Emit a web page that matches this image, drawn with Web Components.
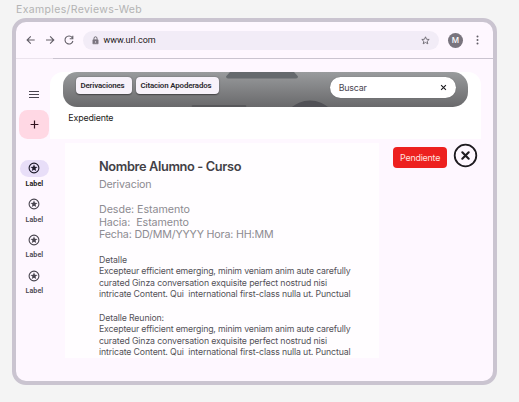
<!DOCTYPE html>
<html lang="es"><head><meta charset="utf-8"><title>Reviews</title>
<style>
body{margin:0;background:#f4f4f4;width:519px;height:402px;overflow:hidden;font-family:Inter,"Liberation Sans",sans-serif}
</style></head><body>
<reviews-page></reviews-page>
<script>
const define=(name,html,after)=>customElements.define(name,class extends HTMLElement{
  connectedCallback(){
    if(this.shadowRoot)return;
    const t=document.createElement('template');t.innerHTML=html;
    this.attachShadow({mode:'open'}).append(t.content.cloneNode(true));
    if(after)after(this);
  }
});

// One line of text, tracked so that it fills the width given in "w".
define('fit-line',`<style>:host{display:block;white-space:pre}span{display:inline-block}</style><span><slot></slot></span>`,el=>{
  const w=parseFloat(el.getAttribute('w'));
  const s=el.shadowRoot.querySelector('span');
  const n=el.textContent.length;
  if(w&&n)s.style.letterSpacing=((w-s.getBoundingClientRect().width)/n).toFixed(4)+'px';
});

define('browser-bar',`<style>
:host{display:flex;height:36px;box-sizing:border-box;align-items:center;padding:0 10px 0 9px;color:#1d1b20;flex:none}
svg{display:block;fill:none;stroke:#625e67;stroke-width:1.1}
.nav{display:flex;gap:7px;width:58px;flex:none}
.url{display:flex;align-items:center;box-sizing:border-box;width:356px;height:19px;border-radius:10px;background:#f2ecf7;padding:0 9px 0 9px;font:400 9px Roboto,sans-serif}
.url fit-line{margin-left:4.6px;flex:1}
.avatar{width:15px;height:15px;border-radius:50%;background:#79747e;color:#fff;font:500 8px/15px Inter,sans-serif;text-align:center;margin-left:9px}
.dots{margin-left:12px}
</style>
<div class="nav">
<svg width="12" height="12" viewBox="0 0 12 12"><path d="M9.7 6H2.3M5.8 2.3 2.1 6l3.7 3.7"/></svg>
<svg width="12" height="12" viewBox="0 0 12 12"><path d="M2 6h7.5M6.1 2.3 9.8 6 6.1 9.7"/></svg>
<svg width="12" height="12" viewBox="0 0 12 12"><path d="M9.2 3.6A4 4 0 1 0 9.9 7M9.8 1.8v3H6.7"/></svg>
</div>
<div class="url">
<svg width="7" height="9" viewBox="0 0 7 9"><path d="M.9 3.8h5.2v4H.9z" fill="#79747e" stroke="#79747e" style="fill:#79747e;stroke:#79747e;stroke-width:.7"/><path d="M2 3.5V2.3a1.5 1.5 0 0 1 3 0v1.2" style="stroke-width:.9"/><circle cx="3.5" cy="5.9" r=".7" style="fill:#f2ecf7;stroke:none"/></svg>
<fit-line w="52">www.url.com</fit-line>
<svg width="9" height="9" viewBox="0 0 9 9" style="stroke-width:.85"><path d="m4.5.8 1.05 2.45 2.65.22-2 1.75.6 2.6L4.5 6.45 2.2 7.82l.6-2.6-2-1.75 2.65-.22z"/></svg>
</div>
<div class="avatar">M</div>
<svg class="dots" width="5" height="10" viewBox="0 0 5 10"><g style="fill:#625e67;stroke:none"><circle cx="2.5" cy="1.5" r="1"/><circle cx="2.5" cy="5" r="1"/><circle cx="2.5" cy="8.5" r="1"/></g></svg>`);

define('rail-item',`<style>
:host{display:flex;flex-direction:column;align-items:center;height:35.8px;flex:none;font:600 7.1px/9px Roboto,sans-serif;color:#49454f;letter-spacing:.1px}
.pill{width:29.5px;height:17px;border-radius:9px;display:flex;align-items:center;justify-content:center;margin-bottom:1.9px}
:host([active]) .pill{background:#e8def8}
:host([active]){color:#1d1b20;font-weight:700}
svg{display:block;color:#49454f}
:host([active]) svg{color:#1d192b}
</style><div class="pill"><svg width="12" height="12" viewBox="0 0 12 12"><circle cx="6" cy="6" r="4.9" fill="none" stroke="currentColor" stroke-width="1.1"/><path fill="currentColor" d="m6 2.3.95 2.4 2.6.2-2 1.65.65 2.55L6 7.7 3.8 9.1l.65-2.55-2-1.65 2.6-.2z"/></svg></div><slot></slot>`);

define('side-rail',`<style>
:host{display:flex;flex-direction:column;align-items:center;width:30px;margin-left:3.4px;margin-right:.2px;padding-top:32px;flex:none}
.menu{width:10px;height:7px;box-sizing:border-box;border-top:1px solid #49454f;border-bottom:1px solid #49454f;display:flex;align-items:center}
.menu i{width:10px;height:1px;background:#49454f}
.fab{width:30px;height:29px;border-radius:8.5px;background:#ffd8e4;display:flex;align-items:center;justify-content:center;margin:11.5px 0 21.4px;flex:none}
</style>
<div class="menu"><i></i></div>
<div class="fab"><svg width="9" height="9" viewBox="0 0 9 9"><path d="M4.5.6v7.8M.6 4.5h7.8" stroke="#31111d" stroke-width="1.2"/></svg></div>
<rail-item active>Label</rail-item><rail-item>Label</rail-item><rail-item>Label</rail-item><rail-item>Label</rail-item>`);

define('chip-button',`<style>
:host{display:flex;align-items:center;box-sizing:border-box;height:17px;border-radius:4px;padding-left:4.3px;background:#f7f2fa;color:#2b292e;box-shadow:0 .6px 1.4px #0007;font:600 7.9px/10px Roboto,sans-serif;flex:none}
</style><slot></slot>`);

define('search-box',`<style>
:host{display:flex;align-items:center;justify-content:space-between;box-sizing:border-box;width:126px;height:21px;border-radius:11px;background:#fff;padding:0 9px 0 8.5px;color:#49454f;font-size:8.9px;box-shadow:0 0 1px #0005}
svg{display:block}
</style><slot></slot><svg width="7" height="7" viewBox="0 0 7 7"><path d="m1.1 1.1 4.8 4.8M5.9 1.1 1.1 5.9" stroke="#1d1b20" stroke-width="1.1"/></svg>`);

define('top-panel',`<style>
:host{display:block;box-sizing:border-box;width:430.5px;height:67px;background:#fff;border-radius:13px 13px 0 0;padding-left:13px;color:#1d1b20}
header{position:relative;display:flex;align-items:flex-start;box-sizing:border-box;width:405px;height:35px;border-radius:14px 15px 15px 14px;background:linear-gradient(#999b9d,#69696b);padding:5px 12px 0 13px;overflow:hidden}
.deco{position:absolute;left:0;top:0}
chip-button,search-box{position:relative}
chip-button+chip-button{margin-left:4px}
search-box{margin-left:auto}
fit-line.t{font-size:8.9px;line-height:11px;margin:5.4px 0 0 5.2px}
</style>
<header>
<svg class="deco" width="405" height="35" viewBox="0 0 405 35"><path d="M167 0h64l4 4.5q0 2-2 2h-68q-2 0-2-2z" fill="#65696d"/><path d="M129 35q-1-2 1-2h52q2 0 1 2z" fill="#58585b"/><circle cx="247" cy="57" r="28.5" fill="#515156"/></svg>
<chip-button style="width:56px"><fit-line w="44">Derivaciones</fit-line></chip-button>
<chip-button style="width:83px"><fit-line w="71">Citacion Apoderados</fit-line></chip-button>
<search-box><fit-line w="28">Buscar</fit-line></search-box>
</header>
<fit-line class="t" w="45">Expediente</fit-line>`);

define('case-card',`<style>
:host{display:block;box-sizing:border-box;width:314px;height:215px;background:#fffdff;padding:14.5px 0 0 34px;overflow:hidden;color:#545258;font-size:8.75px;line-height:11.6px}
h1{margin:0;font-size:12.8px;line-height:18px;font-weight:600;color:#434147}
.meta{font-size:10.7px;line-height:12.7px;color:#8d8b91}
.sub{margin:3.2px 0 12.7px}
.body{margin-top:12.5px}
.body+.body{margin-top:11.6px}
</style>
<h1><fit-line w="142.2">Nombre Alumno - Curso</fit-line></h1>
<div class="meta"><fit-line class="sub" w="52.5">Derivacion</fit-line>
<fit-line w="91">Desde: Estamento</fit-line><fit-line w="90">Hacia:  Estamento</fit-line><fit-line w="174.5">Fecha: DD/MM/YYYY Hora: HH:MM</fit-line></div>
<div class="body"><fit-line w="28">Detalle</fit-line>
<fit-line w="251.5">Excepteur efficient emerging, minim veniam anim aute carefully</fit-line>
<fit-line w="228">curated Ginza conversation exquisite perfect nostrud nisi</fit-line>
<fit-line w="251.5">intricate Content. Qui  international first-class nulla ut. Punctual</fit-line></div>
<div class="body"><fit-line w="65">Detalle Reunion:</fit-line>
<fit-line w="251.5">Excepteur efficient emerging, minim veniam anim aute carefully</fit-line>
<fit-line w="228">curated Ginza conversation exquisite perfect nostrud nisi</fit-line>
<fit-line w="251.5">intricate Content. Qui  international first-class nulla ut. Punctual</fit-line></div>`);

define('status-actions',`<style>
:host{display:flex;align-items:flex-start;margin-left:14.4px}
.tag{display:flex;align-items:center;justify-content:center;width:53.5px;height:21px;margin-top:4.3px;border-radius:4px;background:#ed201f;color:#ffe0df;font-size:8.9px}
svg{display:block;margin:.3px 0 0 6.2px}
</style><div class="tag"><fit-line w="40">Pendiente</fit-line></div>
<svg width="25" height="25" viewBox="0 0 25 25" fill="none" stroke="#1e1b20"><circle cx="12.5" cy="12.5" r="10.8" stroke-width="1.8"/><path d="m9.3 9.3 6.4 6.4M15.7 9.3l-6.4 6.4" stroke-width="2.1" stroke-linecap="round"/></svg>`);

define('reviews-page',`<style>
:host{display:block;box-sizing:border-box;height:402px;padding:2px 0 0 12px}
.name{font-size:10.5px;line-height:15px;height:16px;margin-left:4.1px;color:#b3b3b3}
.frame{box-sizing:border-box;width:484.5px;height:366.5px;border:4px solid #cac4d0;border-radius:14px;background:#fef7ff;display:flex;flex-direction:column;overflow:hidden}
.line{height:1px;flex:none;background:linear-gradient(90deg,#ebe3ed 37px,#cac4d0 37px)}
.content{display:flex;flex:1;min-height:0}
main{padding-top:13px;margin-left:.6px}
.row{display:flex;align-items:flex-start;margin:4px 0 0 14.8px}
</style>
<fit-line class="name" w="126">Examples/Reviews-Web</fit-line>
<div class="frame"><browser-bar></browser-bar><div class="line"></div>
<div class="content"><side-rail></side-rail><main><top-panel></top-panel><div class="row"><case-card></case-card><status-actions></status-actions></div></main></div></div>`);
</script>
</body></html>
